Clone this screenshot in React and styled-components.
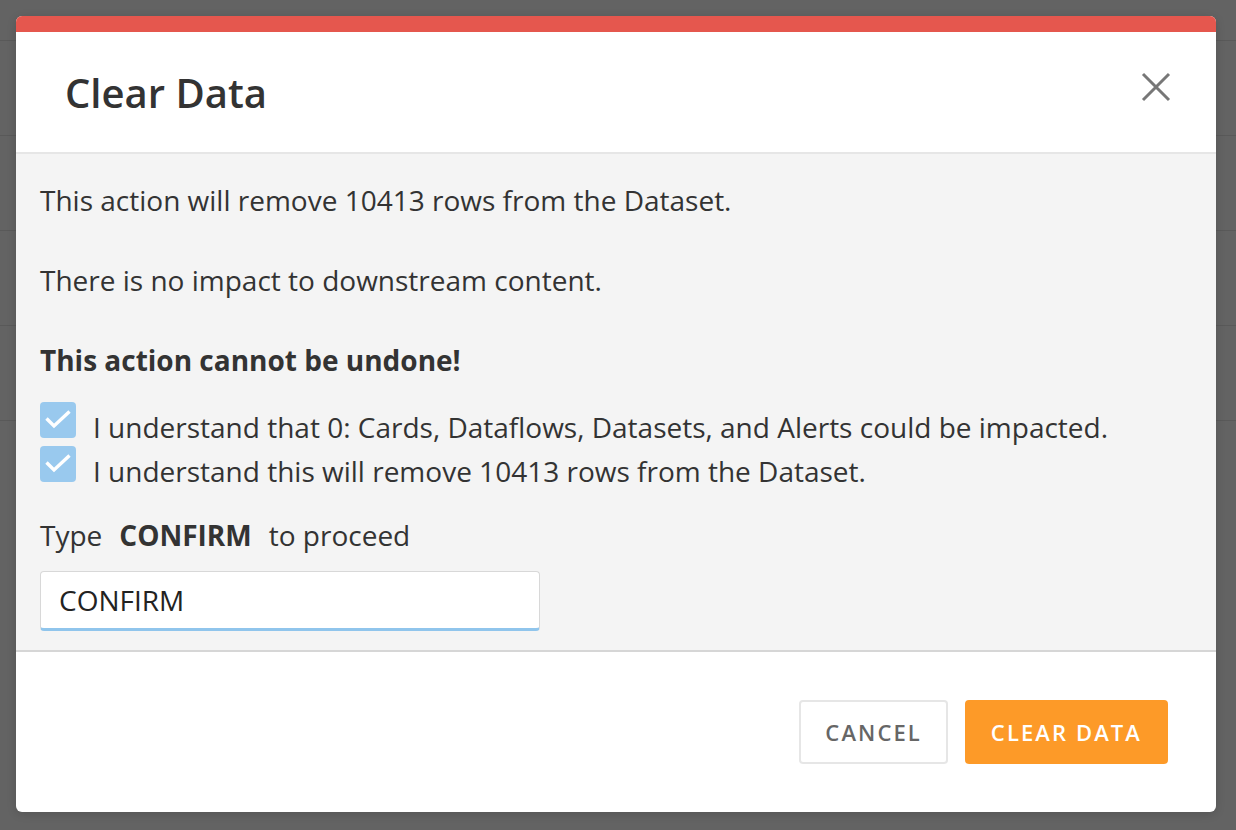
import React from "react";
import styled, { createGlobalStyle } from "styled-components";

const GlobalStyle = createGlobalStyle`
  html, body {
    margin: 0;
    padding: 0;
    background: #636363;
  }
  body {
    font-family: "Open Sans", "Liberation Sans", sans-serif;
    color: #333;
  }
`;

const Backdrop = styled.div`
  width: 1236px;
  height: 830px;
  background: #636363;
  overflow: hidden;
  position: relative;
  padding-top: 40px;
  box-sizing: border-box;
`;

const BgRow = styled.div`
  height: 95px;
  border-top: 1px solid #595959;
  box-sizing: border-box;
`;

const Modal = styled.div`
  position: absolute;
  top: 16px;
  left: 16px;
  width: 1200px;
  height: 796px;
  background: #fff;
  border-radius: 6px;
  overflow: hidden;
  display: flex;
  flex-direction: column;
  box-shadow: 0 2px 10px rgba(0, 0, 0, 0.15);
`;

const Accent = styled.div`
  height: 16px;
  background: #e5574e;
  flex: none;
`;

const Header = styled.div`
  height: 120px;
  display: flex;
  align-items: center;
  justify-content: space-between;
  padding: 0 44px 0 49px;
  border-bottom: 2px solid #e6e6e6;
  flex: none;
`;

const Title = styled.h1`
  margin: 0;
  font-size: 40px;
  font-weight: 600;
  color: #333;
`;

const CloseButton = styled.button`
  width: 32px;
  height: 32px;
  margin-bottom: 11px;
  border: none;
  background: none;
  padding: 0;
  cursor: pointer;
  display: flex;
  align-items: center;
  justify-content: center;
`;

const Body = styled.div`
  flex: 1;
  background: #f4f4f4;
  padding: 26px 24px 0 24px;
  border-bottom: 2px solid #d6d6d6;
  font-size: 28px;
  line-height: 40px;
`;

const Para = styled.p`
  margin: 0 0 40px 0;
  font-weight: ${(p) => (p.$bold ? 700 : 400)};
`;

const CheckList = styled.div`
  display: flex;
  flex-direction: column;
  gap: 8px;
  margin-top: -18px;
`;

const CheckRow = styled.label`
  display: flex;
  align-items: center;
  gap: 17px;
  height: 36px;
  line-height: 36px;
`;

const CheckText = styled.span`
  padding-top: 14px;
`;

const Box = styled.span`
  width: 36px;
  height: 36px;
  border-radius: 4px;
  background: #99c9ee;
  display: flex;
  flex: none;
`;

const Prompt = styled.div`
  margin-top: 33px;
  display: flex;
  gap: 17px;
`;

const Strong = styled.span`
  font-weight: 700;
`;

const Input = styled.input`
  margin-top: 16px;
  width: 500px;
  height: 60px;
  box-sizing: border-box;
  border: 1px solid #d8d8d8;
  border-bottom: 3px solid #90c5ec;
  border-radius: 4px;
  background: #fff;
  padding: 0 18px;
  font-family: "Open Sans", "Liberation Sans", sans-serif;
  font-size: 28px;
  color: #222;
  outline: none;
`;

const Footer = styled.div`
  height: 160px;
  flex: none;
  display: flex;
  align-items: center;
  justify-content: flex-end;
  gap: 17px;
  padding: 0 48px;
  box-sizing: border-box;
`;

const Button = styled.button`
  height: 64px;
  padding: 0 24px;
  border-radius: 4px;
  border: 2px solid ${(p) => (p.$primary ? "#fd9a28" : "#e6e6e6")};
  background: ${(p) => (p.$primary ? "#fd9a28" : "#fff")};
  color: ${(p) => (p.$primary ? "#fff" : "#666")};
  font-family: "Open Sans", "Liberation Sans", sans-serif;
  font-size: 22px;
  font-weight: 600;
  letter-spacing: 2.1px;
  text-transform: uppercase;
  cursor: pointer;
`;

const Check = () => (
  <svg width="36" height="36" viewBox="0 0 36 36" fill="none">
    <path d="M6.5 16.5L14 24L29.5 9.5" stroke="#fff" strokeWidth="3.4" strokeLinejoin="miter" />
  </svg>
);

export default function App() {
  return (
    <>
      <GlobalStyle />
      <Backdrop>
        {[0, 1, 2, 3, 4].map((i) => (
          <BgRow key={i} />
        ))}
        <Modal>
          <Accent />
          <Header>
            <Title>Clear Data</Title>
            <CloseButton aria-label="Close">
              <svg width="30" height="30" viewBox="0 0 30 30">
                <path d="M2 2L28 28M28 2L2 28" stroke="#777" strokeWidth="3" />
              </svg>
            </CloseButton>
          </Header>
          <Body>
            <Para>This action will remove 10413 rows from the Dataset.</Para>
            <Para>There is no impact to downstream content.</Para>
            <Para $bold>This action cannot be undone!</Para>
            <CheckList>
              <CheckRow>
                <Box>
                  <Check />
                </Box>
                <CheckText>
                  I understand that 0: Cards, Dataflows, Datasets, and Alerts could be impacted.
                </CheckText>
              </CheckRow>
              <CheckRow>
                <Box>
                  <Check />
                </Box>
                <CheckText>I understand this will remove 10413 rows from the Dataset.</CheckText>
              </CheckRow>
            </CheckList>
            <Prompt>
              <span>Type</span>
              <Strong>CONFIRM</Strong>
              <span>to proceed</span>
            </Prompt>
            <Input defaultValue="CONFIRM" />
          </Body>
          <Footer>
            <Button>Cancel</Button>
            <Button $primary>Clear Data</Button>
          </Footer>
        </Modal>
      </Backdrop>
    </>
  );
}
